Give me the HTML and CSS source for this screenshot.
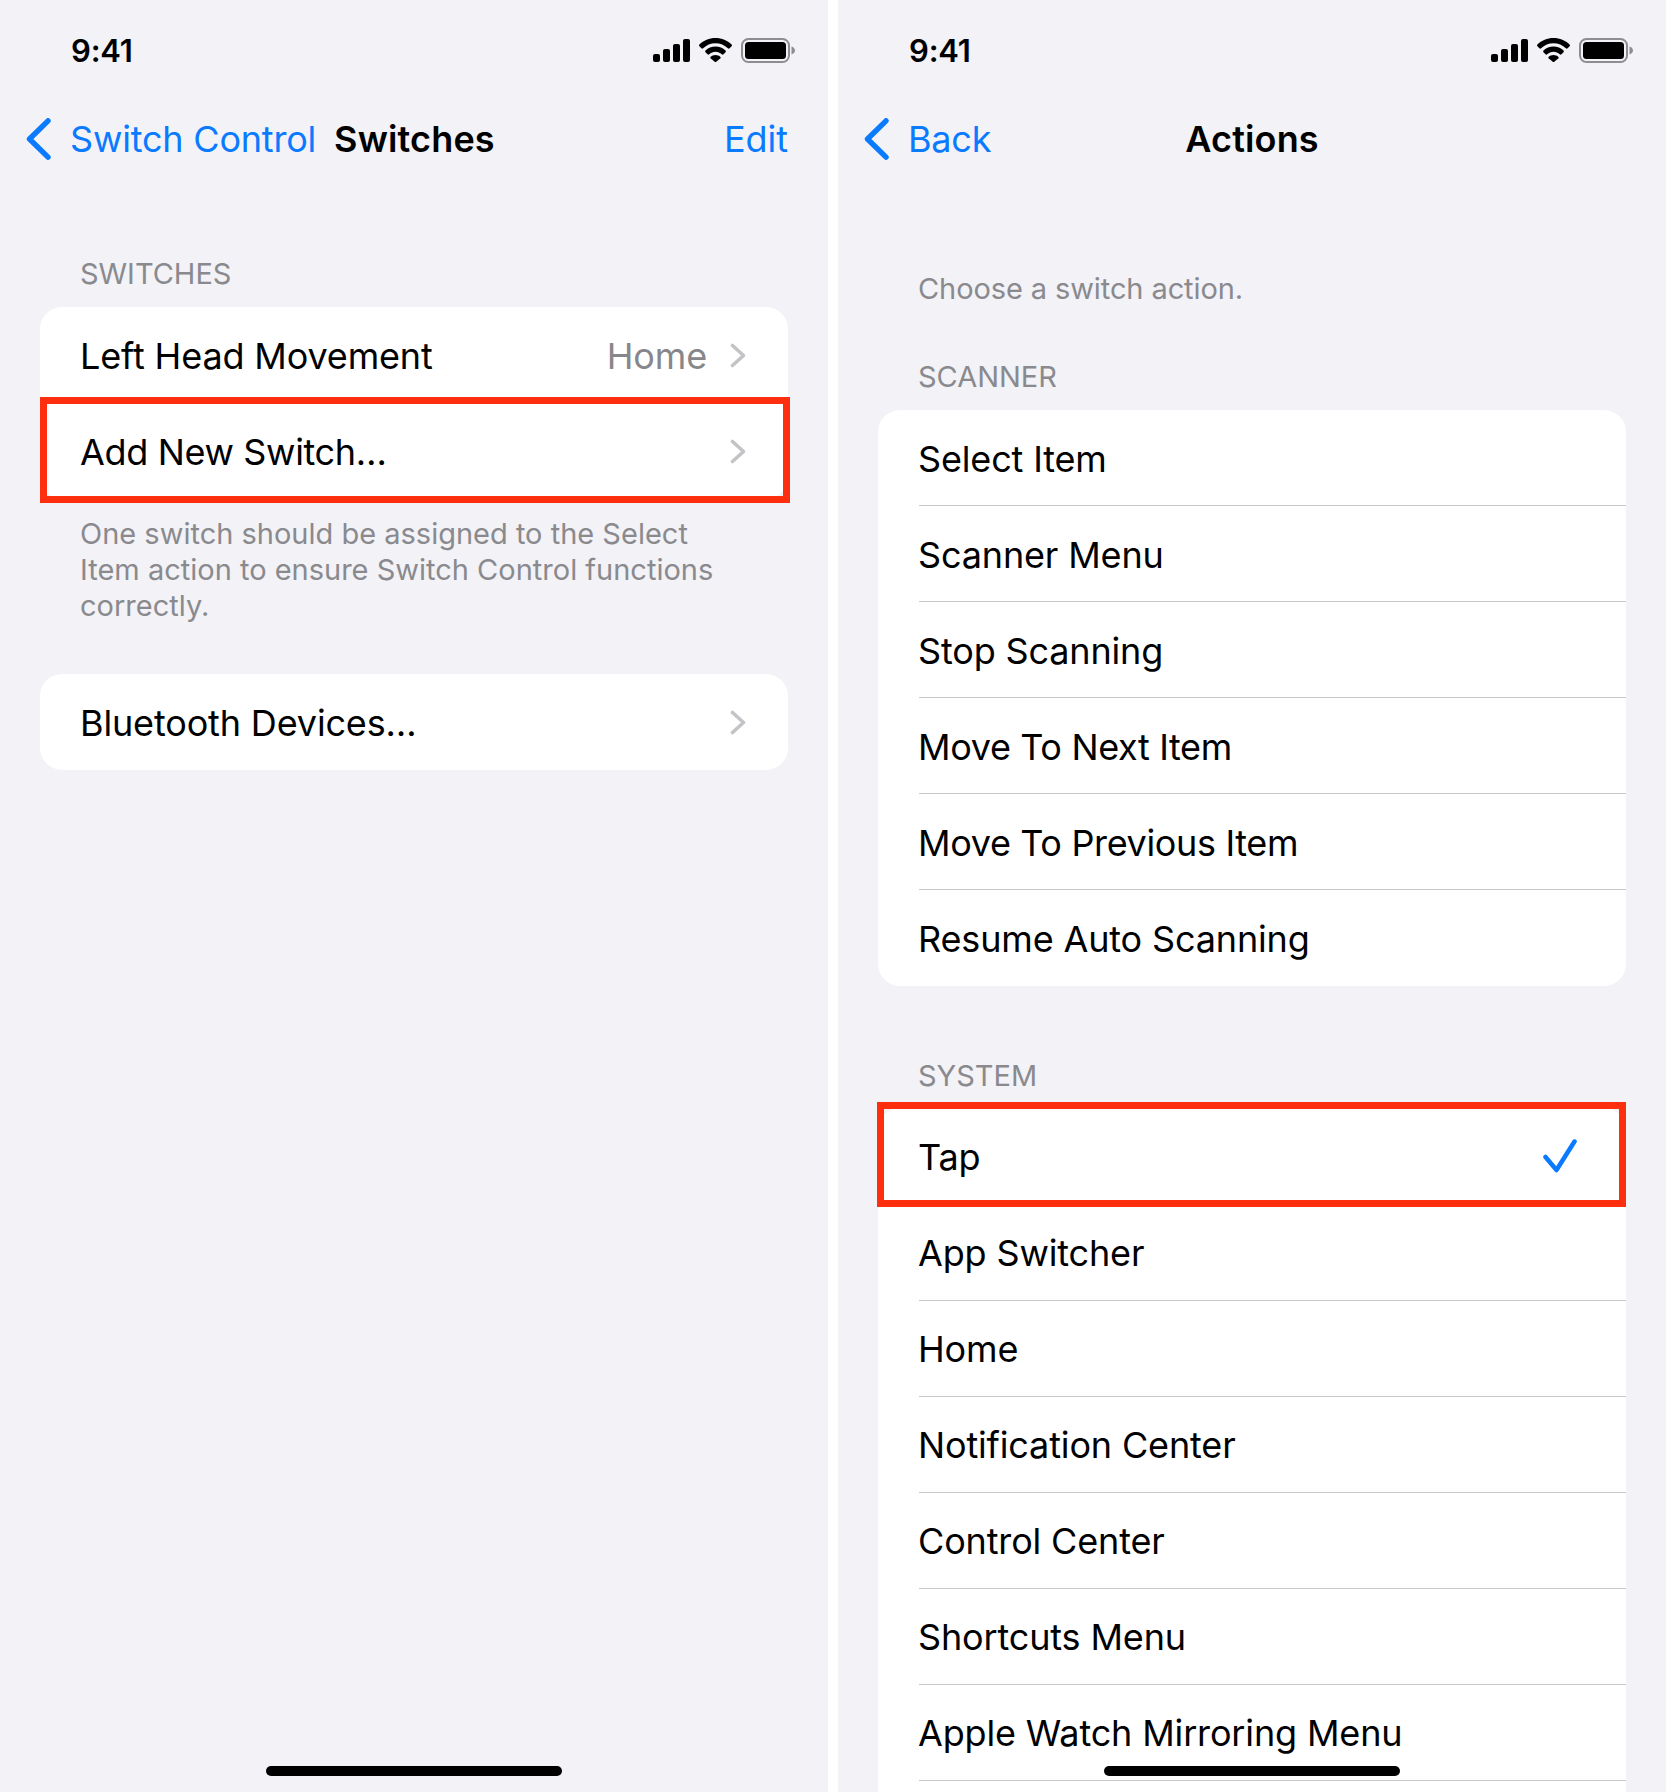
FILE: index.html
```html
<!DOCTYPE html>
<html lang="en">
<head>
<meta charset="utf-8">
<title>Switch Control</title>
<link rel="stylesheet" href="styles.css">
</head>
<body>
<svg class="defs" width="0" height="0" aria-hidden="true">
  <symbol id="signal" viewBox="0 0 37 23"><rect x="0" y="15" width="7" height="8" rx="2"/><rect x="10" y="10" width="7" height="13" rx="2"/><rect x="20" y="5" width="7" height="18" rx="2"/><rect x="30" y="0" width="7" height="23" rx="2"/></symbol>
  <symbol id="wifi" viewBox="0 0 33 24"><path d="M16.5 0C10.2 0 4.600 2.400 .4 6.500c-.5.500-.5 1.200 0 1.700l2 2.100c.5.500 1.200.5 1.700 0C7.400 7.100 11.700 5.200 16.500 5.200s9.100 1.900 12.400 5.100c.5.500 1.200.5 1.700 0l2-2.100c.5-.5.5-1.200 0-1.700C28.400 2.400 22.800 0 16.500 0z"/><path d="M16.500 8.500c-3.900 0-7.400 1.500-10 4-.5.500-.5 1.200 0 1.700l2 2.100c.5.500 1.200.5 1.700 0 1.700-1.500 3.900-2.500 6.300-2.500s4.600 1 6.300 2.500c.5.500 1.200.5 1.700 0l2-2.100c.5-.5.5-1.200 0-1.700-2.600-2.500-6.100-4-10-4z"/><path d="M16.500 17c-1.900 0-3.600.7-4.900 1.900-.4.400-.4.900 0 1.300l4.100 3.500c.5.400 1.100.4 1.600 0l4.100-3.500c.4-.4.400-.9 0-1.300-1.300-1.200-3-1.900-4.900-1.900z"/></symbol>
  <symbol id="battery" viewBox="0 0 54 25"><rect x="1" y="1" width="47" height="23" rx="6.500" fill="none" stroke="#8e8e90" stroke-width="2"/><rect x="4" y="4" width="41" height="17" rx="3.500" fill="#000"/><path d="M50.500 8.500v8c2-.6 3.500-2.200 3.500-4s-1.500-3.400-3.500-4z" fill="#8e8e90"/></symbol>
  <symbol id="back" viewBox="0 0 25 42"><path d="M22 2.800 3.500 21 22 39.200" fill="none" stroke="currentColor" stroke-width="5.400" stroke-linecap="round" stroke-linejoin="round"/></symbol>
  <symbol id="chev" viewBox="0 0 16 25"><path d="M2.500 2.500 13.500 12.500 2.500 22.500" fill="none" stroke="currentColor" stroke-width="3.600" stroke-linecap="round" stroke-linejoin="round"/></symbol>
</svg>
<main class="screens">
  <section class="screen">
    <header class="status">
      <span class="time">9:41</span>
      <span class="status-icons">
        <svg class="ic-signal"><use href="#signal"/></svg>
        <svg class="ic-wifi"><use href="#wifi"/></svg>
        <svg class="ic-battery"><use href="#battery"/></svg>
      </span>
    </header>
    <nav class="nav">
      <svg class="ic-back"><use href="#back"/></svg>
      <span class="nav-link nav-link-long">Switch Control</span>
      <span class="nav-title nav-title-inline">Switches</span>
      <span class="nav-link nav-edit">Edit</span>
    </nav>
    <h2 class="sec-label sec-switches">SWITCHES</h2>
    <div class="card">
      <div class="row"><span class="row-text">Left Head Movement</span><span class="row-value">Home</span><svg class="ic-chev"><use href="#chev"/></svg></div>
      <div class="row row-marked"><span class="row-text row-tight">Add New Switch…</span><svg class="ic-chev"><use href="#chev"/></svg><span class="mark mark-left"></span></div>
    </div>
    <p class="note">One switch should be assigned to the Select<br>Item action to ensure Switch Control functions<br>correctly.</p>
    <div class="card">
      <div class="row"><span class="row-text">Bluetooth Devices…</span><svg class="ic-chev"><use href="#chev"/></svg></div>
    </div>
    <div class="home-bar"></div>
  </section>
  <section class="screen">
    <header class="status">
      <span class="time">9:41</span>
      <span class="status-icons">
        <svg class="ic-signal"><use href="#signal"/></svg>
        <svg class="ic-wifi"><use href="#wifi"/></svg>
        <svg class="ic-battery"><use href="#battery"/></svg>
      </span>
    </header>
    <nav class="nav">
      <svg class="ic-back"><use href="#back"/></svg>
      <span class="nav-link">Back</span>
      <span class="nav-title nav-title-center">Actions</span>
    </nav>
    <p class="intro">Choose a switch action.</p>
    <h2 class="sec-label sec-scanner">SCANNER</h2>
    <div class="card">
      <div class="row row-sep"><span class="row-text">Select Item</span></div>
      <div class="row row-sep"><span class="row-text">Scanner Menu</span></div>
      <div class="row row-sep"><span class="row-text">Stop Scanning</span></div>
      <div class="row row-sep"><span class="row-text row-tight">Move To Next Item</span></div>
      <div class="row row-sep"><span class="row-text row-tight">Move To Previous Item</span></div>
      <div class="row"><span class="row-text">Resume Auto Scanning</span></div>
    </div>
    <h2 class="sec-label sec-system">SYSTEM</h2>
    <div class="card card-open">
      <div class="row row-marked"><span class="row-text">Tap</span>
        <svg class="ic-check" viewBox="0 0 34 34"><path d="M2.500 18 13.500 31 31.500 2.500" fill="none" stroke="#0a7aff" stroke-width="4.500" stroke-linecap="round" stroke-linejoin="round"/></svg>
        <span class="mark mark-right"></span></div>
      <div class="row row-sep"><span class="row-text">App Switcher</span></div>
      <div class="row row-sep"><span class="row-text">Home</span></div>
      <div class="row row-sep"><span class="row-text">Notification Center</span></div>
      <div class="row row-sep"><span class="row-text">Control Center</span></div>
      <div class="row row-sep"><span class="row-text">Shortcuts Menu</span></div>
      <div class="row row-sep"><span class="row-text">Apple Watch Mirroring Menu</span></div>
      <div class="row"></div>
    </div>
    <div class="home-bar"></div>
  </section>
</main>
</body>
</html>
```
FILE: styles.css
```css
* { box-sizing: border-box; }
html, body { margin: 0; padding: 0; background: #fff; }
body { width: 1666px; height: 1792px; overflow: hidden; font-family: Inter, "Liberation Sans", sans-serif; color: #000; -webkit-font-smoothing: antialiased; }
.defs { position: absolute; }
.screens { display: flex; gap: 10px; height: 1792px; }
.screen { position: relative; width: 828px; height: 1792px; overflow: hidden; background: #f2f2f7; padding: 0 40px; }

.status { display: flex; justify-content: space-between; align-items: center; height: 50px; margin-top: 25px; padding: 0 0 0 31px; margin-right: -7px; }
.time { font-size: 31px; font-weight: 600; letter-spacing: -0.2px; }
.status-icons { display: flex; align-items: center; height: 25px; }
.ic-signal { width: 37px; height: 23px; fill: #000; margin-right: 9px; }
.ic-wifi { width: 33px; height: 24px; fill: #000; margin-right: 9px; }
.ic-battery { width: 54px; height: 25px; }

.nav { position: relative; display: flex; align-items: center; height: 56px; margin-top: 36px; margin-left: -14px; }
.ic-back { width: 25px; height: 42px; color: #0a7aff; margin-right: 19px; flex: none; }
.nav-link { font-size: 36px; color: #0a7aff; letter-spacing: -0.2px; white-space: nowrap; }
.nav-title { font-size: 36px; font-weight: 600; letter-spacing: 0.15px; white-space: nowrap; }
.nav-title-inline { margin-left: 18px; }
.nav-edit { margin-left: auto; letter-spacing: -0.05px; }
.nav-title-center { position: absolute; left: 14px; right: 0; text-align: center; }

.sec-label { margin: 0; font-size: 29px; font-weight: 400; line-height: 34px; color: #8a8a8e; padding-left: 40px; letter-spacing: -0.03px; }
.sec-switches { margin-top: 90px; margin-bottom: 16px; }
.sec-scanner { margin-top: 54px; margin-bottom: 16px; }
.sec-system { margin-top: 73px; margin-bottom: 15px; }

.intro { margin: 105px 0 0; font-size: 29px; line-height: 34px; color: #8a8a8e; padding-left: 40px; letter-spacing: -0.1px; }

.card { background: #fff; border-radius: 22px; }
.card-open { border-radius: 22px 22px 0 0; }
.row { position: relative; display: flex; align-items: center; height: 96px; padding: 0 42px 0 41px; }
.row-sep::after { content: ""; position: absolute; left: 41px; right: 0; bottom: 0; height: 1.500px; background: #c8c8cb; }
.card-open .row-sep::after { bottom: -1px; }
.row-text { font-size: 36px; letter-spacing: -0.15px; white-space: nowrap; margin-left: -1px; padding-top: 2px; }
.row-tight { letter-spacing: -0.35px; }
.row-value { margin-left: auto; font-size: 36px; letter-spacing: -0.15px; color: #87878b; margin-right: 23px; padding-top: 2px; }
.ic-chev { width: 16px; height: 25px; color: #c4c4c8; margin-left: auto; flex: none; }
.row-value + .ic-chev { margin-left: 0; }
.ic-check { width: 34px; height: 34px; margin-left: auto; margin-right: 7px; flex: none; }

.mark { position: absolute; border: 7px solid #fe2f0e; }
.mark-left { top: -6px; bottom: -4px; left: 0; right: -2px; }
.mark-right { top: -6px; bottom: -3px; left: -1px; right: 0; }

.note { margin: 17px 0 50px; padding-left: 40px; font-size: 29px; line-height: 36px; color: #8a8a8e; }

.home-bar { position: absolute; left: 266px; bottom: 16px; width: 296px; height: 10px; border-radius: 5px; background: #000; }
```
